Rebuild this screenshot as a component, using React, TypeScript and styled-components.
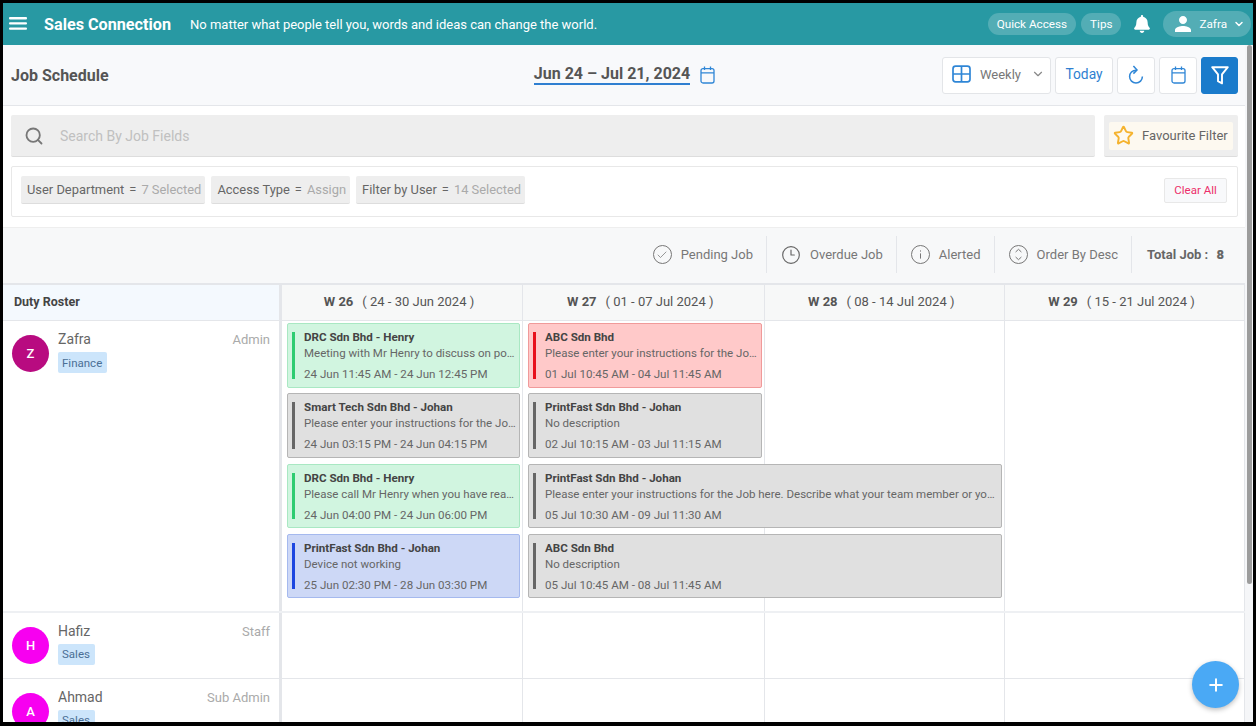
import { createGlobalStyle, styled } from 'styled-components'
import { ChevronDown, Check, Clock3, Plus, Search, Star } from 'lucide-react'
import { FaBell } from 'react-icons/fa'
import { MdPerson } from 'react-icons/md'

const GlobalStyle = createGlobalStyle`
  html, body {
    margin: 0;
    height: 100%;
    overflow: hidden;
    background: #fff;
  }

  * {
    box-sizing: border-box;
  }

  body {
    font-family: Roboto, 'Liberation Sans', sans-serif;
    color: #555;
  }
`

type Tone = 'green' | 'red' | 'grey' | 'blue'

interface Job {
  title: string
  text: string
  time: string
  tone: Tone
  column: number
  row: number
  span?: number
}

const jobs: Job[] = [
  { title: 'DRC Sdn Bhd - Henry', text: 'Meeting with Mr Henry to discuss on potential sales', time: '24 Jun 11:45 AM - 24 Jun 12:45 PM', tone: 'green', column: 1, row: 1 },
  { title: 'Smart Tech Sdn Bhd - Johan', text: 'Please enter your instructions for the Job here', time: '24 Jun 03:15 PM - 24 Jun 04:15 PM', tone: 'grey', column: 1, row: 2 },
  { title: 'DRC Sdn Bhd - Henry', text: 'Please call Mr Henry when you have reached the site', time: '24 Jun 04:00 PM - 24 Jun 06:00 PM', tone: 'green', column: 1, row: 3 },
  { title: 'PrintFast Sdn Bhd - Johan', text: 'Device not working', time: '25 Jun 02:30 PM - 28 Jun 03:30 PM', tone: 'blue', column: 1, row: 4 },
  { title: 'ABC Sdn Bhd', text: 'Please enter your instructions for the Job here', time: '01 Jul 10:45 AM - 04 Jul 11:45 AM', tone: 'red', column: 2, row: 1 },
  { title: 'PrintFast Sdn Bhd - Johan', text: 'No description', time: '02 Jul 10:15 AM - 03 Jul 11:15 AM', tone: 'grey', column: 2, row: 2 },
  { title: 'PrintFast Sdn Bhd - Johan', text: 'Please enter your instructions for the Job here. Describe what your team member or you need to do for this job today', time: '05 Jul 10:30 AM - 09 Jul 11:30 AM', tone: 'grey', column: 2, row: 3, span: 2 },
  { title: 'ABC Sdn Bhd', text: 'No description', time: '05 Jul 10:45 AM - 08 Jul 11:45 AM', tone: 'grey', column: 2, row: 4, span: 2 },
]

const weeks = [
  { label: 'W 26', range: '( 24 - 30 Jun 2024 )' },
  { label: 'W 27', range: '( 01 - 07 Jul 2024 )' },
  { label: 'W 28', range: '( 08 - 14 Jul 2024 )' },
  { label: 'W 29', range: '( 15 - 21 Jul 2024 )' },
]

const filters = [
  { name: 'User Department', value: '7 Selected' },
  { name: 'Access Type', value: 'Assign' },
  { name: 'Filter by User', value: '14 Selected' },
]

const weekColumns = '241px 241.5px 240.5px 1fr'

const toneColors: Record<Tone, { bg: string; border: string; bar: string }> = {
  green: { bg: '#d1f5e0', border: '#a9e8c3', bar: '#2ecc71' },
  red: { bg: '#ffc9c9', border: '#f09a9a', bar: '#e8101c' },
  grey: { bg: '#e0e0e0', border: '#b5b5b5', bar: '#666666' },
  blue: { bg: '#cdd8f6', border: '#a5b9ee', bar: '#1c46e0' },
}

function WindowIcon() {
  return (
    <svg width="19" height="18" viewBox="0 0 19 18" fill="none" stroke="#2f86d6" strokeWidth="1.7">
      <rect x="1" y="1.2" width="17" height="15.6" rx="2.6" />
      <path d="M9.5 1.2v15.6M1 9h17" />
    </svg>
  )
}

function CalendarIcon() {
  return (
    <svg width="15" height="18" viewBox="0 0 15 18" fill="none" stroke="#2f86d6" strokeWidth="1.3">
      <rect x="1" y="2.6" width="13" height="14.4" rx="2" />
      <path d="M1 6.8h13M4.5 0.6v3.4M10.5 0.6v3.4" />
    </svg>
  )
}

function RefreshIcon() {
  return (
    <svg width="16" height="20" viewBox="0 0 16 20" fill="none" stroke="#2f86d6" strokeWidth="1.5">
      <path d="M8 5.2A6.4 6.4 0 1 0 14.4 11.6" />
      <path d="M5.4 1 9 5 5.4 8.6" />
    </svg>
  )
}

function FunnelIcon() {
  return (
    <svg width="18" height="19" viewBox="0 0 18 19" fill="none" stroke="#fff" strokeWidth="1.9" strokeLinejoin="round">
      <path d="M1.2 1.2h15.6L11 8.4v9l-4-2.2V8.4z" />
    </svg>
  )
}

function InfoIcon() {
  return (
    <svg width="19" height="19" viewBox="0 0 19 19" fill="none" stroke="#777" strokeWidth="1">
      <circle cx="9.5" cy="9.5" r="9" />
      <path d="M9.5 8.4v5.2M9.5 5.4v1.2" />
    </svg>
  )
}

function SortIcon() {
  return (
    <svg width="19" height="19" viewBox="0 0 19 19" fill="none" stroke="#777" strokeWidth="1">
      <circle cx="9.5" cy="9.5" r="9" />
      <path d="M6.6 7 9.5 4.3 12.4 7M6.6 12l2.9 2.7 2.9-2.7" />
    </svg>
  )
}

function MenuIcon() {
  return (
    <svg width="18" height="13" viewBox="0 0 18 13" fill="#fff">
      <rect y="0" width="18" height="2.4" rx="1" />
      <rect y="5.2" width="18" height="2.4" rx="1" />
      <rect y="10.4" width="18" height="2.4" rx="1" />
    </svg>
  )
}

function App() {
  return (
    <Frame>
      <GlobalStyle />
      <TopBar>
        <MenuButton>
          <MenuIcon />
        </MenuButton>
        <Brand>Sales Connection</Brand>
        <Slogan>No matter what people tell you, words and ideas can change the world.</Slogan>
        <TopActions>
          <TopPill>Quick Access</TopPill>
          <TopPill>Tips</TopPill>
          <BellButton>
            <FaBell size={18} color="#fff" />
          </BellButton>
          <UserPill>
            <MdPerson size={24} color="#fff" />
            <span>Zafra</span>
            <ChevronDown size={12} color="#fff" strokeWidth={3} />
          </UserPill>
        </TopActions>
      </TopBar>

      <Body>
        <Content>
          <Toolbar>
            <PageTitle>Job Schedule</PageTitle>
            <DateRange>
              <DateText>Jun 24 – Jul 21, 2024</DateText>
              <CalendarIcon />
            </DateRange>
            <ToolButtons>
              <ViewSelect>
                <WindowIcon />
                <span>Weekly</span>
                <ChevronDown size={14} color="#888" />
              </ViewSelect>
              <TodayButton>Today</TodayButton>
              <IconButton>
                <RefreshIcon />
              </IconButton>
              <IconButton>
                <CalendarIcon />
              </IconButton>
              <FilterButton>
                <FunnelIcon />
              </FilterButton>
            </ToolButtons>
          </Toolbar>

          <SearchRow>
            <SearchBox>
              <Search size={20} color="#777" strokeWidth={2.2} />
              <span>Search By Job Fields</span>
            </SearchBox>
            <FavouriteWrap>
              <FavouriteButton>
                <Star size={21} color="#f5b32e" strokeWidth={2.2} />
                <span>Favourite Filter</span>
              </FavouriteButton>
            </FavouriteWrap>
          </SearchRow>

          <FilterPanel>
            {filters.map((filter) => (
              <FilterChip key={filter.name}>
                <span>{filter.name}</span>
                <span>=</span>
                <em>{filter.value}</em>
              </FilterChip>
            ))}
            <ClearButton>Clear All</ClearButton>
          </FilterPanel>

          <StatsBar>
            <StatItem>
              <RoundIcon>
                <Check size={12} color="#777" strokeWidth={1.5} />
              </RoundIcon>
              Pending Job
            </StatItem>
            <StatItem>
              <Clock3 size={20} color="#666" strokeWidth={1.4} />
              Overdue Job
            </StatItem>
            <StatItem>
              <InfoIcon />
              Alerted
            </StatItem>
            <StatItem>
              <SortIcon />
              Order By Desc
            </StatItem>
            <TotalItem>
              Total Job : <b>8</b>
            </TotalItem>
          </StatsBar>

          <HeadRow>
            <RosterHead>Duty Roster</RosterHead>
            {weeks.map((week) => (
              <WeekHead key={week.label}>
                <b>{week.label}</b>
                {week.range}
              </WeekHead>
            ))}
          </HeadRow>

          <PersonRow>
            <PersonCell>
              <Avatar $color="#b80b80">Z</Avatar>
              <PersonInfo>
                <PersonName>
                  Zafra
                  <Role>Admin</Role>
                </PersonName>
                <Department>Finance</Department>
              </PersonInfo>
            </PersonCell>
            <JobGrid>
              {weeks.map((week, index) => (
                <ColumnLine key={week.label} $column={index + 1} />
              ))}
              {jobs.map((job) => (
                <JobCard key={job.time} $tone={job.tone} $column={job.column} $row={job.row} $span={job.span ?? 1}>
                  <JobTitle>{job.title}</JobTitle>
                  <JobText>{job.text}</JobText>
                  <JobTime>{job.time}</JobTime>
                </JobCard>
              ))}
            </JobGrid>
          </PersonRow>

          <PersonRow $thin>
            <PersonCell>
              <Avatar $color="#f700f0">H</Avatar>
              <PersonInfo>
                <PersonName>
                  Hafiz
                  <Role>Staff</Role>
                </PersonName>
                <Department>Sales</Department>
              </PersonInfo>
            </PersonCell>
            <EmptyWeeks>
              {weeks.map((week) => (
                <EmptyWeek key={week.label} />
              ))}
            </EmptyWeeks>
          </PersonRow>

          <PersonRow $thin>
            <PersonCell>
              <Avatar $color="#f700f0">A</Avatar>
              <PersonInfo>
                <PersonName>
                  Ahmad
                  <Role>Sub Admin</Role>
                </PersonName>
                <Department>Sales</Department>
              </PersonInfo>
            </PersonCell>
            <EmptyWeeks>
              {weeks.map((week) => (
                <EmptyWeek key={week.label} />
              ))}
            </EmptyWeeks>
          </PersonRow>
        </Content>

        <ScrollTrack>
          <ScrollThumb />
        </ScrollTrack>
      </Body>

      <AddButton>
        <Plus size={20} color="#fff" strokeWidth={2.4} />
      </AddButton>
    </Frame>
  )
}

const Frame = styled.div`
  position: relative;
  display: flex;
  flex-direction: column;
  width: 1256px;
  height: 726px;
  overflow: hidden;
  border: solid #000;
  border-width: 3px 3px 4px 3px;
`

const TopBar = styled.header`
  display: flex;
  flex: none;
  align-items: center;
  height: 42px;
  padding: 0 2px 0 6px;
  background: #2899a3;
  color: #fff;
`

const MenuButton = styled.div`
  display: flex;
  width: 18px;
  margin-top: -2px;
`

const Brand = styled.div`
  margin-left: 17px;
  font-size: 16.2px;
  font-weight: 700;
`

const Slogan = styled.div`
  margin-left: 19px;
  font-size: 13px;
`

const TopActions = styled.div`
  display: flex;
  align-items: center;
  margin-left: auto;
`

const TopPill = styled.div`
  display: flex;
  align-items: center;
  height: 22px;
  margin-right: 5px;
  padding: 0 9px;
  border-radius: 11px;
  background: #53adb5;
  font-size: 11.7px;
`

const BellButton = styled.div`
  display: flex;
  margin: 0 12px 0 7px;
`

const UserPill = styled.div`
  display: flex;
  align-items: center;
  gap: 4px;
  height: 26px;
  padding: 0 6px 0 8px;
  border-radius: 13px;
  background: #53adb5;
  font-size: 11.7px;

  span {
    margin-right: 2px;
  }
`

const Body = styled.div`
  display: flex;
  flex: 1;
  min-height: 0;
`

const Content = styled.main`
  flex: 1;
  min-width: 0;
`

const Toolbar = styled.section`
  display: grid;
  grid-template-columns: 1fr auto 1fr;
  align-items: center;
  height: 61px;
  padding: 0 7px 0 8px;
  border-bottom: 1px solid #e4e6ea;
  background: #f8f9fb;
`

const PageTitle = styled.h1`
  margin: 0;
  color: #555;
  font-size: 16px;
  font-weight: 700;
`

const DateRange = styled.div`
  display: flex;
  align-items: center;
  gap: 10px;
`

const DateText = styled.div`
  border-bottom: 2px solid #2f7fd1;
  color: #555;
  font-size: 16px;
  font-weight: 700;
  line-height: 18px;
`

const ToolButtons = styled.div`
  display: flex;
  justify-content: flex-end;
  gap: 4px;
`

const ToolButton = styled.div`
  display: flex;
  align-items: center;
  justify-content: center;
  height: 37px;
  border: 1px solid #e3e5e8;
  border-radius: 3px;
  background: #fff;
`

const ViewSelect = styled(ToolButton)`
  justify-content: flex-start;
  gap: 9px;
  width: 109px;
  padding: 0 0 2px 9px;
  color: #777;
  font-size: 13px;

  span {
    margin-right: 1px;
  }
`

const TodayButton = styled(ToolButton)`
  width: 58px;
  padding-bottom: 2px;
  color: #2f7fd1;
  font-size: 13.8px;
`

const IconButton = styled(ToolButton)`
  width: 38px;
`

const FilterButton = styled(ToolButton)`
  width: 37px;
  border-color: #1a7bcb;
  background: #1a7bcb;
`

const SearchRow = styled.section`
  display: flex;
  gap: 9px;
  padding: 9px 7px 0 8px;
`

const SearchBox = styled.div`
  display: flex;
  flex: 1;
  align-items: center;
  gap: 16px;
  height: 42px;
  padding: 0 13px;
  border-bottom: 1px solid #ddd;
  border-radius: 2px;
  background: #eeeeee;
  color: #c0c0c0;
  font-size: 14px;
`

const FavouriteWrap = styled.div`
  display: flex;
  align-items: center;
  width: 134px;
  height: 42px;
  padding: 0 5px;
  border-bottom: 1px solid #ddd;
  border-radius: 2px;
  background: #eeeeee;
`

const FavouriteButton = styled.div`
  display: flex;
  align-items: center;
  gap: 8px;
  width: 100%;
  height: 28px;
  padding-left: 4px;
  border-radius: 2px;
  background: #fdf9f0;
  color: #666;
  font-size: 13px;
  white-space: nowrap;
`

const FilterPanel = styled.section`
  display: flex;
  align-items: center;
  gap: 6px;
  height: 51px;
  margin: 9px 7px 0 8px;
  padding: 0 10px 3px 9px;
  border: 1px solid #e8e8e8;
  border-radius: 2px;
`

const FilterChip = styled.div`
  display: flex;
  align-items: center;
  gap: 5px;
  height: 28px;
  padding: 0 4px 0 6px;
  border-bottom: 1px solid #ddd;
  border-radius: 2px;
  background: #eeeeee;
  color: #666;
  font-size: 12.9px;

  em {
    color: #aaa;
    font-style: normal;
  }
`

const ClearButton = styled.div`
  display: flex;
  align-items: center;
  justify-content: center;
  width: 63px;
  height: 25px;
  margin-left: auto;
  border: 1px solid #e8e8e8;
  border-radius: 2px;
  background: #f8f9fb;
  color: #ec2f6a;
  font-size: 11.5px;
`

const StatsBar = styled.section`
  display: flex;
  align-items: center;
  justify-content: flex-end;
  height: 58px;
  margin-top: 10px;
  padding: 0 21px 2px 0;
  border-top: 1px solid #eee;
  border-bottom: 2px solid #e4e6ea;
  background: #f7f8f9;
`

const StatItem = styled.div`
  display: flex;
  align-items: center;
  gap: 9px;
  height: 37px;
  padding: 0 13px 0 14px;
  border-right: 1px solid #e4e6ea;
  color: #777;
  font-size: 13px;
`

const RoundIcon = styled.span`
  display: flex;
  align-items: center;
  justify-content: center;
  width: 19px;
  height: 19px;
  border: 1px solid #777;
  border-radius: 50%;
`

const TotalItem = styled.div`
  margin-left: 15px;
  color: #666;
  font-size: 13px;
  font-weight: 700;

  b {
    margin-left: 5px;
  }
`

const HeadRow = styled.div`
  display: grid;
  grid-template-columns: 279px ${weekColumns};
  height: 36px;
  border-bottom: 1px solid #e4e6ea;
`

const RosterHead = styled.div`
  display: flex;
  align-items: center;
  padding: 0 0 3px 11px;
  border-right: 3px solid #e4e6ea;
  background: #f4f9fe;
  color: #444;
  font-size: 12.5px;
  font-weight: 700;
`

const WeekHead = styled.div`
  display: flex;
  align-items: center;
  justify-content: center;
  padding: 0 6px 3px 0;
  border-right: 1px solid #e4e6ea;
  background: #f7f8f8;
  color: #555;
  font-size: 13px;

  b {
    margin-right: 9px;
  }
`

const PersonRow = styled.div<{ $thin?: boolean }>`
  display: grid;
  grid-template-columns: 279px 1fr;
  border-bottom: ${(p) => (p.$thin ? '1px solid #e4e6ea' : '2px solid #eef0f3')};
`

const PersonCell = styled.div`
  display: flex;
  gap: 9px;
  padding: 14px 9px 11px 9px;
  border-right: 3px solid #e4e6ea;
`

const Avatar = styled.div<{ $color: string }>`
  display: flex;
  flex: none;
  align-items: center;
  justify-content: center;
  width: 37px;
  height: 37px;
  border-radius: 50%;
  background: ${(p) => p.$color};
  color: #fff;
  font-size: 13px;
  font-weight: 500;
`

const PersonInfo = styled.div`
  flex: 1;
  min-width: 0;
  margin-top: -3px;
`

const PersonName = styled.div`
  display: flex;
  justify-content: space-between;
  align-items: baseline;
  color: #666;
  font-size: 14px;
  line-height: 14px;
`

const Role = styled.span`
  color: #aaa;
  font-size: 13px;
`

const Department = styled.div`
  display: flex;
  align-items: center;
  width: fit-content;
  height: 21px;
  margin-top: 5px;
  padding: 0 5px 0 4px;
  border-radius: 2px;
  background: #cce5fb;
  color: #4a6f96;
  font-size: 11.5px;
`

const JobGrid = styled.div`
  display: grid;
  grid-template-columns: ${weekColumns};
  grid-auto-rows: 64.5px;
  row-gap: 5.8px;
  padding: 2px 0 12.6px;
`

const ColumnLine = styled.div<{ $column: number }>`
  grid-column: ${(p) => p.$column};
  grid-row: 1 / 5;
  margin: -2px 0 -12.6px;
  border-right: 1px solid #e4e6ea;
`

const JobCard = styled.article<{ $tone: Tone; $column: number; $row: number; $span: number }>`
  position: relative;
  grid-column: ${(p) => p.$column} / span ${(p) => p.$span};
  grid-row: ${(p) => p.$row};
  min-width: 0;
  margin: 0 3px 0 5px;
  padding: 5px 2px 0 16px;
  border: 1px solid ${(p) => toneColors[p.$tone].border};
  border-radius: 2px;
  background: ${(p) => toneColors[p.$tone].bg};

  &::before {
    content: '';
    position: absolute;
    top: 8px;
    bottom: 8px;
    left: 4px;
    width: 3px;
    background: ${(p) => toneColors[p.$tone].bar};
  }
`

const JobTitle = styled.div`
  color: #444;
  font-size: 11.6px;
  font-weight: 700;
  line-height: 16px;
`

const JobText = styled.div`
  overflow: hidden;
  color: #666;
  font-size: 11.5px;
  line-height: 16px;
  text-overflow: ellipsis;
  white-space: nowrap;
`

const JobTime = styled.div`
  margin-top: 5px;
  color: #666;
  font-size: 11.6px;
  line-height: 16px;
`

const EmptyWeeks = styled.div`
  display: grid;
  grid-template-columns: ${weekColumns};
  height: 65px;
`

const EmptyWeek = styled.div`
  border-right: 1px solid #e4e6ea;
`

const ScrollTrack = styled.div`
  flex: none;
  width: 8px;
  padding-left: 2px;
  background: #f5f6f8;
`

const ScrollThumb = styled.div`
  width: 5px;
  height: 539px;
  background: #9c9c9c;
  border-radius: 3px;
`

const AddButton = styled.div`
  position: absolute;
  right: 14px;
  bottom: 14px;
  display: flex;
  align-items: center;
  justify-content: center;
  width: 47px;
  height: 47px;
  border-radius: 50%;
  background: #4aa9f5;
  box-shadow: 0 2px 5px rgba(0, 0, 0, 0.25);
`

export default App
